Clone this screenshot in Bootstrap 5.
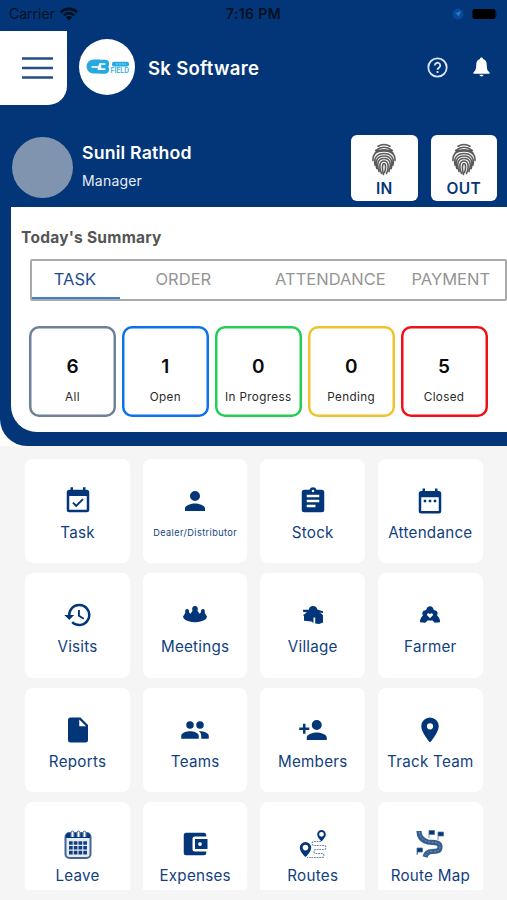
<!DOCTYPE html>
<html lang="en">
<head>
<meta charset="utf-8">
<meta name="viewport" content="width=device-width, initial-scale=1">
<title>Sk Software</title>
<link href="https://cdn.jsdelivr.net/npm/bootstrap@5.3.0/dist/css/bootstrap.min.css" rel="stylesheet">
<style>
:root{--navy:#033678;--ink:#123f80}
body{font-family:Inter,"Liberation Sans",sans-serif;background:#f5f5f5;height:900px;overflow:hidden;line-height:1.2}
svg{display:block;flex:none}
.hero{background:var(--navy);height:446px;border-bottom-left-radius:27px}
.status{height:31px;padding:0 9px 3px;color:#03101f;font-size:14px}
.status>*{flex:1}
.clock{font-weight:600;letter-spacing:.4px}
.menu-btn{width:67px;height:74px;border-radius:0 0 19px 0;background:#fff;padding:0 0 1px 22px;border:0}
.logo{width:56px;height:56px;margin:8px 13px 0 12px;padding-left:1px}
.brand{font-size:18.5px;font-weight:600;letter-spacing:.3px}
.help-links{gap:25px;margin-right:17.5px;padding-bottom:2px}
.profile{height:102px;padding:30px 10px 0 12px}
.avatar{width:61px;height:61px;background:#8094b0;margin:2px 9px 0 0}
.person{margin-top:7px}
.who{font-size:17.7px;font-weight:600;letter-spacing:.2px}
.role{font-size:14px;letter-spacing:.2px;color:#e6ecf5;margin-top:10px}
.punch{width:66.5px;height:66px;border-radius:6px;color:var(--navy);font-size:15.5px;font-weight:600;border:0;background:#fff;letter-spacing:.3px}
.punch span{margin-top:2px}
.panel{margin-left:11px;height:225px;border-bottom-left-radius:26px;padding-top:22px}
.panel h2{font-size:15.5px;font-weight:700;letter-spacing:.25px;color:#555;margin:0 0 11.400px 10px}
.tabs{margin-left:19px;height:42px;border:2px solid #a9a9a9;border-radius:2px;font-size:16.500px;color:#959595}
.tabs>div{height:38px}
.tabs .on{color:#1d4b8f;border-bottom:2px solid #3f7fd0;width:88px;padding:2px 2px 0 0}
.tab-order{margin-left:35.500px;width:119.500px}
.tab-attendance{width:136.500px}
.stats{margin:25px 19.500px 0 18px;gap:6px}
.stat{flex:1;height:91px;box-shadow:inset 0 0 0 2.500px currentColor;border-radius:10px;padding-top:29px}
.stat b{font-size:19px;font-weight:600;color:#0a0a0a;line-height:23px}
.stat span{font-size:11.700px;letter-spacing:.35px;color:#2a2a2a;margin-top:12px;white-space:nowrap}
.tiles{display:grid;grid-template-columns:repeat(4,104.500px);grid-auto-rows:104.300px;gap:10px 13.100px;margin:13px 0 0 25.300px;height:431px;overflow:hidden}
.tile{background:#fff;border-radius:8px;color:var(--ink);font-size:15.200px;letter-spacing:.25px;padding-top:26px}
.tile svg{width:30px;height:32px;fill:var(--navy)}
.tile span{margin-top:6px;line-height:20px;white-space:nowrap}
.tile .tiny{font-size:9.200px;letter-spacing:.4px}
</style>
</head>
<body>
<div class="bg-white">
<header class="hero">
  <div class="status d-flex align-items-center">
    <div class="d-flex align-items-center gap-1"><span>Carrier</span>
      <svg width="20" height="14" viewBox="0 0 20 14" fill="none" stroke="#03101f" stroke-width="2.6"><path d="M1.8 5.2a11.8 11.8 0 0 1 16.4 0M4.8 8.4a7.5 7.5 0 0 1 10.4 0"/><path d="M10 13.4 6.9 10.4a4.5 4.5 0 0 1 6.2 0z" fill="#03101f" stroke="none"/></svg>
    </div>
    <div class="clock text-center">7:16 PM</div>
    <div class="d-flex align-items-center justify-content-end">
      <svg width="49" height="14" viewBox="0 0 49 14"><circle cx="9" cy="7" r="5.5" fill="#08499a"/><path d="M12 4 6 6.8l2.6.6.7 2.6z" fill="#2f7fc6"/><rect x="23.500" y="2" width="23" height="10" rx="2" fill="#000"/><path d="M47.500 5v4" stroke="#052550"/></svg>
    </div>
  </div>
  <div class="d-flex align-items-start text-white">
    <button class="menu-btn d-flex align-items-center" aria-label="Menu"><svg width="31" height="24" viewBox="0 0 31 24" stroke="#244f88" stroke-width="2.6"><path d="M0 2.500h31M0 12h31M0 21.500h31"/></svg></button>
    <div class="logo rounded-circle bg-white d-flex align-items-center justify-content-center">
      <svg width="44" height="16" viewBox="0 0 44 16"><path d="M14 .5H7.500a7 7 0 0 0 0 14H13l4-3.500h-5.500" fill="#25a9df"/><path d="M5.500 8h8" stroke="#fff" stroke-width="1.600"/><path d="M12.500 2.500h6.500q2.300 0 2.300 2.400t-2.300 2.600h-3.800M19 7.500q2.300.2 2.300 2.700t-2.300 2.700h-6" fill="none" stroke="#25a9df" stroke-width="3.600"/><rect x="26" y="2.800" width="17" height="4.600" rx="2" fill="#25a9df"/><path d="M30 5h10" stroke="#a7def3" stroke-width=".9" stroke-dasharray="2 1"/><text x="24.500" y="14" textLength="18.500" lengthAdjust="spacingAndGlyphs" font-size="7.500" font-weight="700" fill="#45b7e4">FIELD</text></svg>
    </div>
    <div class="brand align-self-center">Sk Software</div>
    <div class="help-links d-flex align-items-center align-self-center ms-auto">
      <svg width="21" height="21" viewBox="0 0 21 21" fill="none" stroke="#dce6f5" stroke-width="1.800"><circle cx="10.500" cy="10.500" r="9.200"/><path d="M7.800 8.500a2.700 2.700 0 1 1 4.200 2.200c-1 .7-1.500 1-1.500 2.100M10.500 14v2"/></svg>
      <svg width="17" height="21" viewBox="0 0 18 21" preserveAspectRatio="none" fill="#fff"><path d="M9 .5c-1 0-1.600.7-1.600 1.600C4.700 2.800 3.400 5 3.400 7.800c0 4.400-.8 6.200-2.900 7.400v1.500h17v-1.500c-2.100-1.200-2.900-3-2.900-7.400 0-2.800-1.300-5-4-5.700C10.600 1.200 10 .5 9 .5zM6.700 17.800a2.400 2.400 0 0 0 4.600 0z"/></svg>
    </div>
  </div>
  <div class="profile d-flex align-items-start text-white">
    <div class="avatar rounded-circle"></div>
    <div class="person"><div class="who">Sunil Rathod</div><div class="role">Manager</div></div>
    <div class="d-flex ms-auto" style="gap:13px">
      <button class="punch d-flex flex-column align-items-center p-0 pt-2"><svg width="26" height="35" viewBox="0 0 26 35"><use href="#finger"/></svg><span>IN</span></button>
      <button class="punch d-flex flex-column align-items-center p-0 pt-2"><svg width="26" height="35" viewBox="0 0 26 35"><use href="#finger"/></svg><span>OUT</span></button>
    </div>
  </div>
  <section class="panel bg-white">
    <h2>Today's Summary</h2>
    <nav class="tabs d-flex align-items-center">
      <div class="on d-flex align-items-center justify-content-center">TASK</div>
      <div class="tab-order d-flex align-items-center">ORDER</div>
      <div class="tab-attendance d-flex align-items-center">ATTENDANCE</div>
      <div class="d-flex align-items-center">PAYMENT</div>
    </nav>
    <div class="stats d-flex text-center">
      <div class="stat d-flex flex-column" style="color:#6f8196"><b>6</b><span>All</span></div>
      <div class="stat d-flex flex-column" style="color:#0d72ea"><b>1</b><span>Open</span></div>
      <div class="stat d-flex flex-column" style="color:#23cd56"><b>0</b><span>In Progress</span></div>
      <div class="stat d-flex flex-column" style="color:#f0c22c"><b>0</b><span>Pending</span></div>
      <div class="stat d-flex flex-column" style="color:#ee1216"><b>5</b><span>Closed</span></div>
    </div>
  </section>
</header>
</div>
<main class="tiles">
  <div class="tile d-flex flex-column align-items-center"><svg viewBox="0 0 24 24"><path d="M16.530 11.060 15.470 10l-4.880 4.880-2.120-2.120-1.060 1.060L10.590 17zM19 3h-1V1h-2v2H8V1H6v2H5a2 2 0 0 0-2 2v14a2 2 0 0 0 2 2h14a2 2 0 0 0 2-2V5a2 2 0 0 0-2-2zm0 16H5V8h14z"/></svg><span>Task</span></div>
  <div class="tile d-flex flex-column align-items-center"><svg viewBox="0 0 24 24"><path d="M12 12a4 4 0 1 0 0-8 4 4 0 0 0 0 8zm0 2c-2.670 0-8 1.340-8 4v2h16v-2c0-2.660-5.330-4-8-4z"/></svg><span class="tiny">Dealer/Distributor</span></div>
  <div class="tile d-flex flex-column align-items-center"><svg viewBox="0 0 24 24"><path d="M19 3h-4.180a3 3 0 0 0-5.640 0H5a2 2 0 0 0-2 2v14a2 2 0 0 0 2 2h14a2 2 0 0 0 2-2V5a2 2 0 0 0-2-2zm-7 0a1 1 0 1 1 0 2 1 1 0 0 1 0-2zm2 14H7v-2h7zm3-4H7v-2h10zm0-4H7V7h10z"/></svg><span>Stock</span></div>
  <div class="tile d-flex flex-column align-items-center"><svg viewBox="0 0 24 24"><path d="M9 11H7v2h2zm4 0h-2v2h2zm4 0h-2v2h2zm2-7h-1V2h-2v2H8V2H6v2H5a2 2 0 0 0-2 2v14a2 2 0 0 0 2 2h14a2 2 0 0 0 2-2V6a2 2 0 0 0-2-2zm0 16H5V9h14z"/></svg><span>Attendance</span></div>

  <div class="tile d-flex flex-column align-items-center"><svg viewBox="0 0 24 24"><path d="M13 3a9 9 0 0 0-9 9H1l3.890 3.890.07.14L9 12H6a7 7 0 1 1 2.060 4.940l-1.420 1.420A9 9 0 1 0 13 3zm-1 5v5l4.280 2.540.72-1.210-3.500-2.080V8z"/></svg><span>Visits</span></div>
  <div class="tile d-flex flex-column align-items-center"><svg viewBox="0 0 30 32"><path d="M3 17.500c1-1.500 1.800-2.700 2.300-4-.5-2 .2-3.500 1.700-3.500s2.500 1.500 2 3.300l1.500 1.400 2-3c-.8-2.500 0-4.700 2.500-4.700s3.300 2.200 2.500 4.700l2 3 1.500-1.400c-.5-1.800.5-3.300 2-3.300s2.200 1.500 1.700 3.500c.5 1.300 1.300 2.500 2.300 4l-.8 2.300c-5 4.500-17.400 4.500-22.400 0z"/></svg><span>Meetings</span></div>
  <div class="tile d-flex flex-column align-items-center"><svg viewBox="0 0 30 32"><path d="M5 10.800h5.800C11 8.500 12.500 7 15 7s4 1.500 4.300 3.500l5.700 1.700v1.700l-4-.4c2.200.6 3.300 1.500 4 3v7l-4 1.600-3.800-.6V18.500h-1.700V24l-2-1.500-7.500-.8V17l-1-1 4-2.600-4-.6z"/></svg><span>Village</span></div>
  <div class="tile d-flex flex-column align-items-center"><svg viewBox="0 0 30 32"><path d="M15 7.200c2 0 3.400 1.300 3.400 3.100l1 .9c3 .2 3.900 2.800 2.700 5.300 2 1.700 3 4 3 6.700l-5.500.6-2-2.300h-5.200l-2 2.300-5.500-.6c0-2.700 1-5 3-6.700-1.200-2.500-.3-5.100 2.700-5.300l1-.9c0-1.800 1.400-3.100 3.400-3.100z"/><path d="M15 19.200l-2.900-3c-.6-1.600 1.700-2.700 2.900-1 1.200-1.700 3.500-.6 2.900 1z" fill="#fff"/></svg><span>Farmer</span></div>

  <div class="tile d-flex flex-column align-items-center"><svg viewBox="0 0 24 24"><path d="M6 2a2 2 0 0 0-2 2v16a2 2 0 0 0 2 2h12a2 2 0 0 0 2-2V8l-6-6zm7 7V3.500L18.500 9z"/></svg><span>Reports</span></div>
  <div class="tile d-flex flex-column align-items-center"><svg viewBox="0 0 24 24"><path d="M16 11a3 3 0 1 0 0-6 3 3 0 0 0 0 6zm-8 0a3 3 0 1 0 0-6 3 3 0 0 0 0 6zm0 2c-2.330 0-7 1.170-7 3.500V19h14v-2.500C15 14.170 10.330 13 8 13zm8 0-.97.050A4.220 4.220 0 0 1 17 16.500V19h6v-2.500c0-2.330-4.670-3.500-7-3.500z"/></svg><span>Teams</span></div>
  <div class="tile d-flex flex-column align-items-center"><svg viewBox="0 0 24 24"><path d="M15 12a4 4 0 1 0 0-8 4 4 0 0 0 0 8zm-9-2V7H4v3H1v2h3v3h2v-3h3v-2zm9 4c-2.670 0-8 1.340-8 4v2h16v-2c0-2.660-5.330-4-8-4z"/></svg><span>Members</span></div>
  <div class="tile d-flex flex-column align-items-center"><svg viewBox="0 0 24 24"><path d="M12 2a7 7 0 0 0-7 7c0 5.250 7 13 7 13s7-7.750 7-13a7 7 0 0 0-7-7zm0 9.500a2.500 2.500 0 1 1 0-5 2.500 2.500 0 0 1 0 5z"/></svg><span>Track Team</span></div>

  <div class="tile d-flex flex-column align-items-center"><svg viewBox="0 0 30 32"><rect x="2.500" y="5" width="25" height="25" rx="4" fill="#e7edf5" stroke="#416697" stroke-width="2"/><path d="M3 10V8q0-3 3-3h18q3 0 3 3v2z"/><path d="M8 9V4.500q1.500-3 3 0V9M14 9V4.500q1.500-3 3 0V9M20 9V4.500q1.500-3 3 0V9" fill="#fff" stroke="#52739e" stroke-width="1.200"/><path d="M6 15h18M6 19.800h18M6 24.600h18" stroke="#123f80" stroke-width="3.600" stroke-dasharray="3.700 1.060"/></svg><span>Leave</span></div>
  <div class="tile d-flex flex-column align-items-center"><svg viewBox="0 0 24 24"><path d="M21 18v1a2 2 0 0 1-2 2H5a2 2 0 0 1-2-2V5a2 2 0 0 1 2-2h14a2 2 0 0 1 2 2v1h-9a2 2 0 0 0-2 2v8a2 2 0 0 0 2 2zm-9-2h10V8H12zm4-2.500a1.500 1.500 0 1 1 0-3 1.500 1.500 0 0 1 0 3z"/></svg><span>Expenses</span></div>
  <div class="tile d-flex flex-column align-items-center"><svg viewBox="0 0 30 32"><path fill-rule="evenodd" d="M7.500 14a5.700 5.700 0 0 0-5.700 5.700c0 4 5.700 9.300 5.700 9.300s5.700-5.300 5.700-9.300A5.700 5.700 0 0 0 7.500 14zm0 2.800a2.800 2.800 0 1 1 0 5.600 2.800 2.800 0 0 1 0-5.600zM23.500 2a4.300 4.300 0 0 0-4.300 4.300c0 3.200 4.300 7.200 4.300 7.200s4.300-4 4.300-7.200A4.300 4.300 0 0 0 23.500 2zm0 1.900a2.400 2.400 0 1 1 0 4.800 2.400 2.400 0 0 1 0-4.800z"/><path d="M23 13.500h-7q-2 0-2 2t2 2h10q2 0 2 2t-2 2H18q-2 0-2 2t2 2h6q2 0 2 2t-2 2H9" fill="none" stroke="#6a86ad" stroke-width="1.100" stroke-dasharray="1.800 .8"/></svg><span>Routes</span></div>
  <div class="tile d-flex flex-column align-items-center"><svg viewBox="0 0 30 32"><path d="M4 3c0 6 3 9.500 9 11 6 1 12-.5 12 5 0 4.500-4 4.500-8 4.500-4 0-6 1.500-7 5.500" fill="none" stroke="#365d92" stroke-width="5.200"/><path d="M4.500 4c0 5 3.500 8.500 8.500 9.800 6 1.200 12-.5 12 5.200 0 4.500-4 4.300-8 4.300-4 0-6 1.700-7 5" fill="none" stroke="#8fa6c4" stroke-width=".7" stroke-dasharray="2 1.500"/><path d="M14 10V2.500h5.500v4H14M23 12V4h5.500v4H23M2 27v-7h5.500v4H3" stroke="#55759f" stroke-width=".8"/></svg><span>Route Map</span></div>
</main>
<svg width="0" height="0" aria-hidden="true"><defs><g id="finger" fill="none" stroke="#5a5a5a" stroke-width="1.600" stroke-linecap="round"><path d="M7 3.200q6-3.300 12 0M4.800 7.500q8.200-6.500 16.400 0M3 12.500C5 5 21 5 23 12.500M2 17.500C1.500 8 9 8 13 8s11.500 1 11 9.500M4 22c-1.500-7 2-11.500 9-11.500s10.500 4.500 9 11.500M5.800 25.500C3.500 17 7 13 13 13s9.500 4 7.200 12.500M8 28.500c-2.500-7-1.500-13 5-13s7.500 6 5 13M10.500 30.500C8 25 8 18 13 18s5 7 2.500 12.500M12.500 31.500C11 27 11 20.500 13 20.500s2 5 .5 9"/></g></defs></svg>
<script src="https://cdn.jsdelivr.net/npm/bootstrap@5.3.0/dist/js/bootstrap.bundle.min.js"></script>
</body>
</html>
